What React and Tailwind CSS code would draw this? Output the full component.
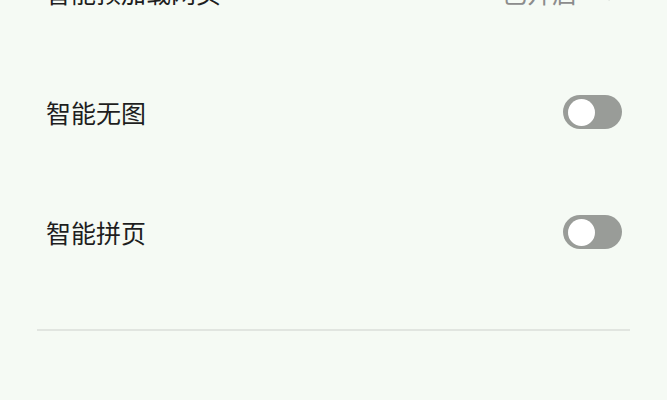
import React from "react";

function Toggle() {
  return (
    <div className="flex h-[34px] w-[59px] items-center rounded-full bg-[#999c98] pl-[5px]">
      <div className="h-[27px] w-[27px] rounded-full bg-white" />
    </div>
  );
}

function Row({ label, children }) {
  return (
    <div className="flex h-[120px] items-center justify-between pl-[46px] pr-[45px]">
      <span className="text-[25px] leading-none text-[#1e1e1e]">{label}</span>
      {children}
    </div>
  );
}

export default function App() {
  return (
    <div
      className="h-[400px] w-[667px] overflow-hidden bg-[#f5faf4]"
      style={{ fontFamily: '"Noto Sans CJK SC", "Noto Sans", sans-serif' }}
    >
      <div className="-mt-[68px]">
        <Row label="智能预加载网页">
          <div className="mr-[5px] flex items-center gap-[30px]">
            <span className="text-[25px] leading-none text-[#8c8c8c]">已开启</span>
            <svg width="10" height="20" viewBox="0 0 10 20" fill="none">
              <path d="M2 3l6 7-6 7" stroke="#2a2a2a" strokeWidth="2.2" strokeLinecap="round" strokeLinejoin="round" />
            </svg>
          </div>
        </Row>
        <Row label="智能无图">
          <Toggle />
        </Row>
        <Row label="智能拼页">
          <Toggle />
        </Row>
      </div>
      <div className="mx-[37px] mt-[37px] h-[2px] bg-[#e1e5e0]" />
    </div>
  );
}
